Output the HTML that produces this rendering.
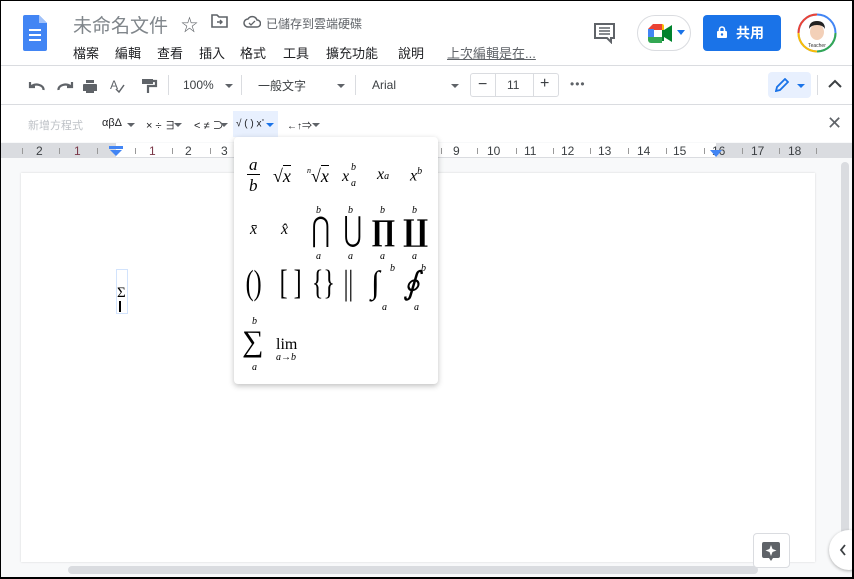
<!DOCTYPE html>
<html><head><meta charset="utf-8"><style>
*{margin:0;padding:0;box-sizing:border-box}
body{width:854px;height:579px;overflow:hidden;background:#fff;font-family:"Liberation Sans","Noto Sans CJK TC",sans-serif;position:relative;color:#202124}
.a{position:absolute}
.frame{position:absolute;left:0;top:0;width:854px;height:579px;border:1px solid #000;border-right-width:2px;border-bottom-width:2px;pointer-events:none;z-index:50}
.menu span{position:absolute;top:0;white-space:nowrap}
.m{font-family:"Liberation Serif","DejaVu Serif",serif;font-style:italic;position:absolute;color:#000}
.r{font-family:"Liberation Serif","DejaVu Serif",serif;position:absolute;color:#000}
.tick{position:absolute;top:148px;width:1px;height:6px;background:#999}
.rn{position:absolute;top:144px;font-size:12px;color:#3c4043}
</style></head><body>
<div class="frame"></div>
<svg class="a" style="left:23px;top:15px" width="24" height="36" viewBox="0 0 24 36"><path d="M2 0h14l8 8v26a2 2 0 0 1-2 2H2a2 2 0 0 1-2-2V2a2 2 0 0 1 2-2z" fill="#4285f4"/><path d="M16 0v8h8z" fill="#a1c2fa"/><rect x="6" y="14" width="12" height="2" fill="#fff"/><rect x="6" y="19" width="12" height="2" fill="#fff"/><rect x="6" y="24" width="12" height="2" fill="#fff"/></svg>
<div class="a" style="left:73px;top:11px;font-size:19px;color:#80868b">未命名文件</div>
<div class="a" style="left:181px;top:11px;font-size:17px;color:#5f6368">☆</div>
<svg class="a" style="left:211px;top:14px" width="17" height="14" viewBox="0 0 17 14"><path d="M1 1h5l2 2h8v10H1z" fill="none" stroke="#5f6368" stroke-width="1.6"/><path d="M6 8h5M9 6l2 2-2 2" stroke="#5f6368" stroke-width="1.4" fill="none"/></svg>
<svg class="a" style="left:243px;top:15px" width="18" height="13" viewBox="0 0 18 13"><path d="M5 12a4 4 0 0 1 0-8 5 5 0 0 1 9 1 3.5 3.5 0 0 1 0 7z" fill="none" stroke="#5f6368" stroke-width="1.5"/><path d="M6 8l2 2 4-4" stroke="#5f6368" stroke-width="1.3" fill="none"/></svg>
<div class="a" style="left:266px;top:15px;font-size:12px;color:#5f6368">已儲存到雲端硬碟</div>
<div class="a menu" style="left:0;top:43px;font-size:13px;width:600px;height:20px"><span style="left:73px">檔案</span><span style="left:115px">編輯</span><span style="left:157px">查看</span><span style="left:199px">插入</span><span style="left:240px">格式</span><span style="left:283px">工具</span><span style="left:326px">擴充功能</span><span style="left:398px">說明</span><span style="left:447px;color:#5f6368;text-decoration:underline">上次編輯是在...</span></div>
<svg class="a" style="left:594px;top:23px" width="21" height="21" viewBox="0 0 21 21"><path d="M1 1h19v14H17v4l-4-4H1z" fill="none" stroke="#5f6368" stroke-width="2"/><path d="M5 5h11M5 8h11M5 11h11" stroke="#5f6368" stroke-width="1.5"/></svg>
<div class="a" style="left:637px;top:15px;width:54px;height:36px;border:1px solid #dadce0;border-radius:18px"></div>
<svg class="a" style="left:648px;top:24px" width="24" height="19" viewBox="0 0 24 19"><path d="M0 5L5 0h9v6H0z" fill="#ea4335"/><path d="M0 5h6v8H0z" fill="#4285f4"/><path d="M0 13h14v6H3a3 3 0 0 1-3-3z" fill="#34a853"/><path d="M6 6h8v7H6z" fill="#fff"/><path d="M14 6h2l8-5v17l-8-5v4h-2z" fill="#00832d"/><path d="M14 0v6h2V2a2 2 0 0 0-2-2z" fill="#fbbc04"/></svg>
<div class="a" style="left:677px;top:30px;width:0;height:0;border-left:4px solid transparent;border-right:4px solid transparent;border-top:5px solid #1a73e8"></div>
<div class="a" style="left:703px;top:15px;width:78px;height:36px;background:#1a73e8;border-radius:4px;color:#fff;font-size:14px;font-weight:bold;line-height:36px;padding-left:33px">共用</div>
<svg class="a" style="left:717px;top:26px" width="10" height="12" viewBox="0 0 10 12"><rect x="0" y="5" width="10" height="7" rx="1" fill="#fff"/><path d="M2.5 5V3.5a2.5 2.5 0 0 1 5 0V5" stroke="#fff" stroke-width="1.6" fill="none"/><circle cx="5" cy="8.5" r="1.2" fill="#1a73e8"/></svg>
<svg class="a" style="left:797px;top:13px" width="40" height="40" viewBox="0 0 40 40"><circle cx="20" cy="20" r="18.5" fill="#fff" stroke="#4285f4" stroke-width="2"/><path d="M20 38.5A18.5 18.5 0 0 1 1.5 20" stroke="#fbbc04" stroke-width="2" fill="none"/><path d="M38.5 20A18.5 18.5 0 0 1 20 38.5" stroke="#34a853" stroke-width="2" fill="none"/><path d="M1.5 20A18.5 18.5 0 0 1 20 1.5" stroke="#ea4335" stroke-width="2" fill="none"/><ellipse cx="20" cy="19" rx="7" ry="8" fill="#f3d0b8"/><path d="M12 16q0-8 8-8t8 8q-2-4-8-4t-8 4z" fill="#222"/><text x="20" y="34" font-size="5" text-anchor="middle" fill="#333" font-family="Liberation Sans">Teacher</text></svg>
<div class="a" style="left:0;top:65px;width:854px;height:1px;background:#dadce0"></div>
<svg class="a" style="left:28px;top:78px" width="120" height="16" viewBox="0 0 120 16">
<path d="M2 4v5h5M2.5 9a7 5 0 0 1 13 3" stroke="#5f6368" stroke-width="2.2" fill="none"/>
<path d="M44 4v5h-5M43.5 9a7 5 0 0 0-13 3" stroke="#5f6368" stroke-width="2.2" fill="none"/>
<path d="M58 2h8v3h-8zM56 6h12a1 1 0 0 1 1 1v6h-3v-2h-8v2h-3V7a1 1 0 0 1 1-1z" fill="#5f6368"/><rect x="58" y="11" width="8" height="4" fill="#5f6368"/>
<text x="86" y="11" font-size="12" fill="#5f6368" font-family="Liberation Sans" text-anchor="middle">A</text><path d="M88 11l3 3 5-7" stroke="#5f6368" stroke-width="1.5" fill="none"/>
</svg>
<svg class="a" style="left:142px;top:78px" width="16" height="16" viewBox="0 0 16 16"><rect x="0" y="1" width="11" height="5" fill="#5f6368"/><path d="M11 3h3v5H6v7" stroke="#5f6368" stroke-width="2.2" fill="none"/></svg>
<div class="a" style="left:168px;top:75px;width:1px;height:20px;background:#dadce0"></div>
<div class="a" style="left:183px;top:78px;font-size:12px;color:#3c4043">100%</div>
<div class="a" style="left:225px;top:84px;border-left:4px solid transparent;border-right:4px solid transparent;border-top:4px solid #5f6368"></div>
<div class="a" style="left:241px;top:75px;width:1px;height:20px;background:#dadce0"></div>
<div class="a" style="left:258px;top:77px;font-size:12px;color:#3c4043">一般文字</div>
<div class="a" style="left:337px;top:84px;border-left:4px solid transparent;border-right:4px solid transparent;border-top:4px solid #5f6368"></div>
<div class="a" style="left:355px;top:75px;width:1px;height:20px;background:#dadce0"></div>
<div class="a" style="left:372px;top:78px;font-size:12px;color:#3c4043">Arial</div>
<div class="a" style="left:451px;top:84px;border-left:4px solid transparent;border-right:4px solid transparent;border-top:4px solid #5f6368"></div>
<div class="a" style="left:470px;top:73px;width:89px;height:24px;border:1px solid #dadce0;border-radius:3px"></div>
<div class="a" style="left:495px;top:73px;width:1px;height:24px;background:#dadce0"></div>
<div class="a" style="left:533px;top:73px;width:1px;height:24px;background:#dadce0"></div>
<div class="a" style="left:478px;top:76px;font-size:16px;color:#3c4043">−</div>
<div class="a" style="left:507px;top:78px;font-size:12px;color:#3c4043">11</div>
<div class="a" style="left:540px;top:75px;font-size:16px;color:#3c4043">+</div>
<div class="a" style="left:570px;top:77px;font-size:12px;color:#5f6368;letter-spacing:1px">•••</div>
<div class="a" style="left:768px;top:72px;width:43px;height:26px;background:#e8f0fe;border-radius:4px"></div>
<svg class="a" style="left:775px;top:78px" width="14" height="14" viewBox="0 0 14 14"><path d="M1 13l1-4 8-8 3 3-8 8z" stroke="#1a73e8" stroke-width="1.8" fill="none"/></svg>
<div class="a" style="left:797px;top:84px;border-left:4px solid transparent;border-right:4px solid transparent;border-top:4px solid #1a73e8"></div>
<div class="a" style="left:817px;top:75px;width:1px;height:20px;background:#dadce0"></div>
<svg class="a" style="left:828px;top:79px" width="14" height="10" viewBox="0 0 14 10"><path d="M1 8l6-6 6 6" stroke="#3c4043" stroke-width="2" fill="none"/></svg>
<div class="a" style="left:0;top:104px;width:854px;height:1px;background:#dadce0"></div>
<div class="a" style="left:28px;top:117px;font-size:11px;color:#bdc1c6">新增方程式</div>
<div class="a" style="left:102px;top:117px;font-size:11px;color:#202124">αβΔ</div>
<div class="a" style="left:127px;top:123px;border-left:4px solid transparent;border-right:4px solid transparent;border-top:4px solid #5f6368"></div>
<div class="a" style="left:146px;top:117px;font-size:11px">× ÷ ∃</div>
<div class="a" style="left:174px;top:123px;border-left:4px solid transparent;border-right:4px solid transparent;border-top:4px solid #5f6368"></div>
<div class="a" style="left:194px;top:117px;font-size:11px">&lt; ≠ ⊃</div>
<div class="a" style="left:220px;top:123px;border-left:4px solid transparent;border-right:4px solid transparent;border-top:4px solid #5f6368"></div>
<div class="a" style="left:233px;top:111px;width:45px;height:26px;background:#e8f0fe"></div>
<div class="a" style="left:236px;top:117px;font-size:10px">√ ( ) x<sup style="font-size:7px">▫</sup></div>
<div class="a" style="left:266px;top:123px;border-left:4px solid transparent;border-right:4px solid transparent;border-top:4px solid #1a73e8"></div>
<div class="a" style="left:287px;top:117px;font-size:10px">←↑⇒</div>
<div class="a" style="left:312px;top:123px;border-left:4px solid transparent;border-right:4px solid transparent;border-top:4px solid #5f6368"></div>
<div class="a" style="left:827px;top:113px;font-size:18px;color:#5f6368">✕</div>
<div class="a" style="left:0;top:142px;width:854px;height:437px;background:#f8f9fa"></div>
<div class="a" style="left:0;top:143px;width:854px;height:15px;background:#dadce0"></div>
<div class="a" style="left:116px;top:143px;width:600px;height:15px;background:#fff"></div>
<div class="a" style="left:0;top:157px;width:854px;height:1px;background:#dadce0"></div>
<div class="rn" style="left:36px">2</div><div class="rn" style="left:74px;color:#7a3848">1</div>
<div class="rn" style="left:149px;color:#7a3848">1</div><div class="rn" style="left:185px">2</div><div class="rn" style="left:221px">3</div>
<div class="rn" style="left:453px">9</div><div class="rn" style="left:487px">10</div><div class="rn" style="left:524px">11</div><div class="rn" style="left:561px">12</div><div class="rn" style="left:598px">13</div><div class="rn" style="left:637px">14</div><div class="rn" style="left:673px">15</div><div class="rn" style="left:712px">16</div><div class="rn" style="left:751px">17</div><div class="rn" style="left:788px">18</div>
<div class="tick" style="left:22px"></div><div class="tick" style="left:59px"></div><div class="tick" style="left:97px"></div><div class="tick" style="left:135px"></div><div class="tick" style="left:172px"></div><div class="tick" style="left:210px"></div><div class="tick" style="left:441px"></div><div class="tick" style="left:477px"></div><div class="tick" style="left:516px"></div><div class="tick" style="left:553px"></div><div class="tick" style="left:590px"></div><div class="tick" style="left:628px"></div><div class="tick" style="left:666px"></div><div class="tick" style="left:704px"></div><div class="tick" style="left:742px"></div><div class="tick" style="left:779px"></div><div class="tick" style="left:816px"></div>
<svg class="a" style="left:109px;top:146px" width="14" height="10" viewBox="0 0 14 10"><rect x="0" y="0" width="14" height="3" fill="#4285f4"/><path d="M1 4h12l-6 6z" fill="#4285f4"/></svg>
<svg class="a" style="left:709px;top:150px" width="14" height="8" viewBox="0 0 14 8"><path d="M1 0h12l-6 7z" fill="#4285f4"/></svg>
<div class="a" style="left:21px;top:173px;width:794px;height:389px;background:#fff;box-shadow:0 0 2px rgba(0,0,0,.15)"></div>
<div class="a" style="left:116px;top:269px;width:12px;height:45px;border:1px solid #d2e3fc"></div>
<div class="r" style="left:117px;top:285px;font-size:15px">Σ</div>
<div class="a" style="left:119px;top:301px;width:2px;height:11px;background:#000"></div>
<div class="a" style="left:841px;top:162px;width:8px;height:400px;background:#dadce0;border-radius:4px"></div>
<div class="a" style="left:68px;top:566px;width:690px;height:8px;background:#dadce0;border-radius:4px"></div>
<div class="a" style="left:753px;top:533px;width:37px;height:35px;background:#fff;border:1px solid #dadce0;border-radius:4px"></div>
<svg class="a" style="left:762px;top:542px" width="18" height="19" viewBox="0 0 18 19"><path d="M2 0h14a2 2 0 0 1 2 2v12a2 2 0 0 1-2 2h-5l-2 3-2-3H2a2 2 0 0 1-2-2V2a2 2 0 0 1 2-2z" fill="#5f6368"/><path d="M9 3l1.5 4 4 1.5-4 1.5L9 14l-1.5-4-4-1.5 4-1.5z" fill="#fff"/></svg>
<div class="a" style="left:829px;top:530px;width:40px;height:40px;background:#fff;border-radius:50%;box-shadow:0 1px 3px rgba(0,0,0,.3)"></div>
<svg class="a" style="left:839px;top:544px" width="8" height="12" viewBox="0 0 8 12"><path d="M6 1L2 6l4 5" stroke="#3c4043" stroke-width="1.8" fill="none"/></svg>
<!-- popup -->
<div class="a" style="left:234px;top:137px;width:204px;height:247px;background:#fff;border-radius:4px;box-shadow:0 2px 6px rgba(0,0,0,.25)"></div>
<div class="m" style="left:249px;top:155px;font-size:17px">a</div>
<div class="a" style="left:247px;top:174px;width:13px;height:1px;background:#000"></div>
<div class="m" style="left:249px;top:176px;font-size:17px">b</div>
<div class="r" style="left:273px;top:166px;font-size:18px">√<span style="border-top:1px solid #000;font-style:italic">x</span></div>
<div class="r" style="left:307px;top:166px;font-size:18px"><sup style="font-size:8px;font-style:italic;position:relative;top:-2px">n</sup>√<span style="border-top:1px solid #000;font-style:italic">x</span></div>
<div class="m" style="left:342px;top:168px;font-size:16px">x</div><div class="m" style="left:351px;top:162px;font-size:10px">b</div><div class="m" style="left:351px;top:178px;font-size:10px">a</div>
<div class="m" style="left:377px;top:166px;font-size:16px">x<span style="font-size:10px">a</span></div>
<div class="m" style="left:410px;top:166px;font-size:16px">x<sup style="font-size:10px">b</sup></div>
<div class="m" style="left:250px;top:221px;font-size:16px">x̄</div>
<div class="m" style="left:281px;top:221px;font-size:16px">x̂</div>
<div class="m" style="left:316px;top:205px;font-size:10px">b</div><div class="r" style="left:310px;top:215px;font-size:26px;transform:scaleY(1.3) scaleX(.85)">⋂</div><div class="m" style="left:316px;top:251px;font-size:10px">a</div>
<div class="m" style="left:348px;top:205px;font-size:10px">b</div><div class="r" style="left:342px;top:215px;font-size:26px;transform:scaleY(1.3) scaleX(.85)">⋃</div><div class="m" style="left:348px;top:251px;font-size:10px">a</div>
<div class="m" style="left:380px;top:205px;font-size:10px">b</div><div class="r" style="left:371px;top:214px;font-size:30px;font-weight:bold">∏</div><div class="m" style="left:380px;top:251px;font-size:10px">a</div>
<div class="m" style="left:412px;top:205px;font-size:10px">b</div><div class="r" style="left:403px;top:214px;font-size:30px;font-weight:bold">∐</div><div class="m" style="left:412px;top:251px;font-size:10px">a</div>
<div class="r" style="left:243px;top:264px;font-size:32px;transform:scaleX(.75) scaleY(1.1)">()</div>
<div class="r" style="left:276px;top:264px;font-size:32px;transform:scaleX(.75) scaleY(1.1)">[ ]</div>
<div class="r" style="left:308px;top:264px;font-size:32px;transform:scaleX(.75) scaleY(1.1)">{}</div>
<div class="r" style="left:342px;top:264px;font-size:32px;transform:scaleX(.75) scaleY(1.1)">||</div>
<div class="r" style="left:371px;top:264px;font-size:32px;font-style:italic">∫</div><div class="m" style="left:390px;top:263px;font-size:10px">b</div><div class="m" style="left:382px;top:302px;font-size:10px">a</div>
<div class="r" style="left:403px;top:264px;font-size:32px;font-style:italic">∮</div><div class="m" style="left:421px;top:263px;font-size:10px">b</div><div class="m" style="left:414px;top:302px;font-size:10px">a</div>
<div class="m" style="left:252px;top:316px;font-size:10px">b</div>
<div class="r" style="left:242px;top:325px;font-size:30px">∑</div>
<div class="m" style="left:252px;top:362px;font-size:10px">a</div>
<div class="r" style="left:276px;top:336px;font-size:16px">lim</div>
<div class="m" style="left:276px;top:352px;font-size:10px">a→b</div>
</body></html>
